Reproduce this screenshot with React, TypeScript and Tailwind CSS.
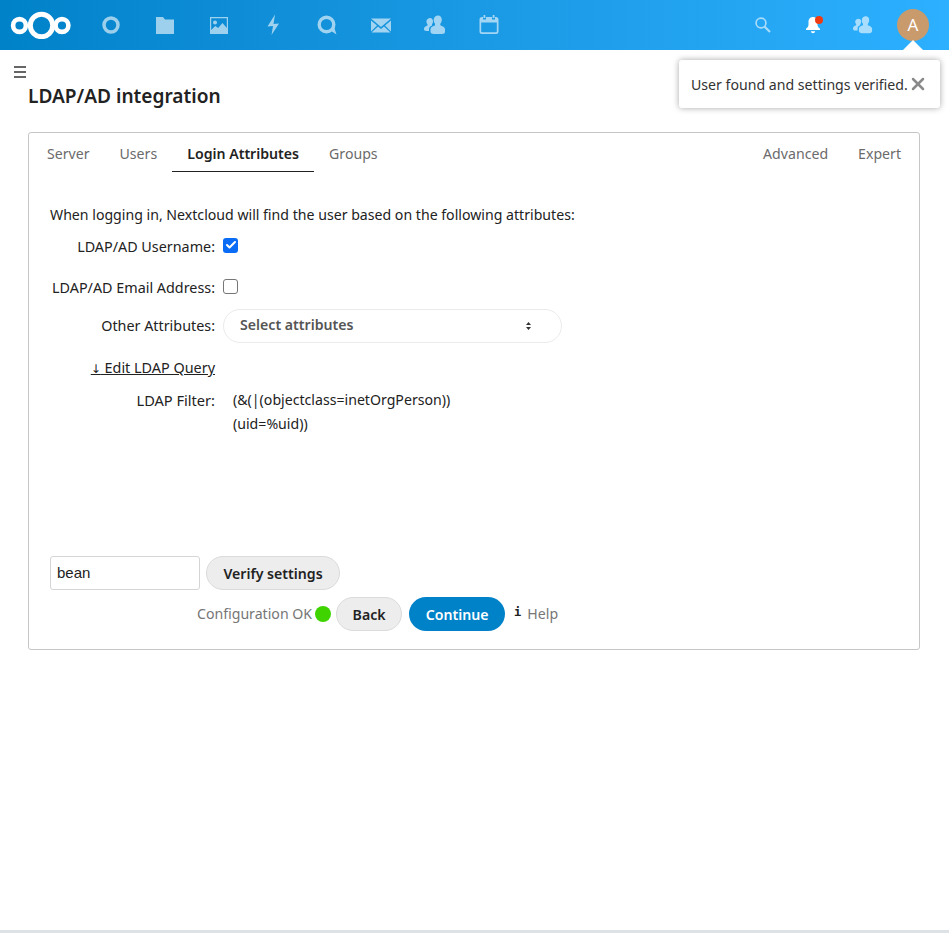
import { Check, X } from 'lucide-react';

const Logo = () => (
    <svg width="62" height="28" viewBox="0 0 62 28" fill="none" stroke="#fff">
        <circle cx="31.5" cy="14.5" r="11.2" strokeWidth="5" />
        <circle cx="9.5" cy="14.5" r="6.4" strokeWidth="4.6" />
        <circle cx="52" cy="14.5" r="6.4" strokeWidth="4.6" />
    </svg>
);

const NavIcon = ({ children }: { children: React.ReactNode }) => (
    <div className="w-[54px] h-[50px] flex items-center justify-center">
        <svg width="22" height="22" viewBox="0 0 22 22" fill="#fff" className="opacity-60">
            {children}
        </svg>
    </div>
);

const people = (
    <path d="M14 1.500c2.400 0 3.800 1.900 3.800 4.200 0 1.700-.7 3-1.500 4v1.500c2 .8 4.700 1.800 4.700 3.800v2.700c0 1.300-1.200 2.300-3 2.300h-8c-2 0-3.500-1-3.500-2.300V15c0-2 2.600-3 4.500-3.600V9.700c-.8-1-1.300-2.300-1.300-4 0-2.300 2-4.200 4.300-4.200zM6.200 4c1.700 0 2.800 1.400 2.800 3.200 0 1.300-.5 2.200-1 3v1.200c-2 .8-3 2-3 3.600v2H2c-1 0-2-.8-2-1.700v-.6c0-1.800 1.900-2.700 3.500-3.300v-1.200c-.6-.8-1.100-1.700-1.100-3 0-1.800 2-3.200 3.800-3.200z" />
);

const Field = ({ label, children }: { label: string; children: React.ReactNode }) => (
    <div className="flex items-center">
        <div className="w-[165px] text-right shrink-0 text-[#222] text-[14.35px]">{label}</div>
        <div className="ml-2 flex items-center">{children}</div>
    </div>
);

const Tab = ({ label, active }: { label: string; active?: boolean }) => (
    <div className={`px-[15px] h-10 pt-[5px] flex items-center border-b ${active ? 'border-[#222] text-[#222] font-semibold' : 'border-transparent text-[#6b6b6b]'}`}>
        {label}
    </div>
);

export default function App() {
    return (
        <div className="relative h-[933px] bg-white overflow-hidden flex flex-col text-[14.13px] text-[#222] font-['Noto_Sans',sans-serif]">
            <header className="h-[50px] shrink-0 flex items-center bg-gradient-to-r from-[#0082c9] to-[#2cb0ff]">
                <div className="ml-[10px] mr-[12px] flex"><Logo /></div>
                <NavIcon>
                    <circle cx="11" cy="11" r="7" fill="none" stroke="#fff" strokeWidth="3.5" />
                </NavIcon>
                <NavIcon>
                    <path d="M2 3h7l2 2.500h9V20H2z" />
                </NavIcon>
                <NavIcon>
                    <path fillRule="evenodd" d="M2 3h18v17H2zm1.200 1.200v14.600h15.600V4.200zM7 6.500a2 2 0 1 1 0 4 2 2 0 0 1 0-4zM3.200 16l4-4 3 2 4.300-5 4.300 5v4.800H3.200z" />
                </NavIcon>
                <NavIcon>
                    <path d="M13 0.500 L5.500 12.500 L11 12 L9.500 21 L17 9.500 L11.500 10z" />
                </NavIcon>
                <NavIcon>
                    <path d="M14.500 16.500 L20.500 20.500 L18 13z" />
                    <circle cx="10.500" cy="10.500" r="7.300" fill="none" stroke="#fff" strokeWidth="3.400" />
                </NavIcon>
                <NavIcon>
                    <path d="M1 4.500h20L11 13zM1 6.500v11l6-6zM21 6.500v11l-6-6zM8 12.500l3 2.500 3-2.500 6.500 6h-19z" />
                </NavIcon>
                <NavIcon>{people}</NavIcon>
                <NavIcon>
                    <path fillRule="evenodd" d="M5.500 1h1.800v3H5.500zM14.700 1h1.800v3h-1.800zM4 3h1v2.400h3V3h6v2.400h3V3h1a2.500 2.500 0 0 1 2.500 2.500v12A2.500 2.500 0 0 1 18 20H4a2.500 2.500 0 0 1-2.500-2.500v-12A2.500 2.500 0 0 1 4 3zM3.200 8.500v9c0 .5.3.8.8.8h14c.5 0 .8-.3.8-.8v-9z" />
                </NavIcon>
                <div className="ml-auto flex items-center">
                    <div className="w-[44px] h-[50px] flex items-center justify-center mr-[3px]">
                        <svg width="18" height="18" viewBox="0 0 18 18" fill="none" stroke="#fff" className="opacity-60">
                            <circle cx="7" cy="7" r="4.900" strokeWidth="1.700" />
                            <path d="M10.500 10.500 L16 16" strokeWidth="2.200" />
                        </svg>
                    </div>
                    <div className="relative w-[50px] h-[50px] flex items-center justify-center">
                        <svg width="16" height="18" viewBox="0 0 16 18" fill="#fff">
                            <path d="M8 1c3 0 4.500 2.300 4.500 5v3c0 1.500 1.500 3 2.500 3.800V14H1v-1.200C2 12 3.500 10.500 3.500 9V6C3.500 3.300 5 1 8 1zM5.800 15.200h4.400C10 16.500 9 17.200 8 17.200s-2-.7-2.200-2z" />
                        </svg>
                        <div className="absolute left-[27px] top-[16px] w-2 h-2 rounded-full bg-[#f03b12]" />
                    </div>
                    <div className="w-[50px] h-[50px] flex items-center justify-center">
                        <svg width="20" height="20" viewBox="0 0 22 22" fill="#fff" className="opacity-60">{people}</svg>
                    </div>
                    <div className="relative w-[50px] h-[50px] mr-[11px] flex items-center justify-center">
                        <div className="w-8 h-8 rounded-full bg-[#c99a6b] text-white text-[17px] flex items-center justify-center">A</div>
                        <div className="absolute left-[15px] bottom-0 w-0 h-0 border-x-[10px] border-x-transparent border-b-[10px] border-b-white" />
                    </div>
                </div>
            </header>

            <main className="flex-1 relative">
                <button className="absolute left-[14px] top-[16px] w-3 flex flex-col gap-[3px]">
                    <span className="h-[2px] bg-[#666]" />
                    <span className="h-[2px] bg-[#666]" />
                    <span className="h-[2px] bg-[#666]" />
                </button>

                <div className="absolute right-[9px] top-[10px] h-[48px] pl-[12px] pr-[12px] w-[261px] flex items-center justify-between rounded-[3px] bg-white shadow-[0_0_6px_rgba(0,0,0,0.35)]">
                    <span className="whitespace-nowrap text-[#333] mt-[2px]">User found and settings verified.</span>
                    <X size={20} strokeWidth={3} className="text-[#8a8a8a] shrink-0" />
                </div>

                <div className="pl-7 pr-[29px]">
                    <h2 className="pt-[32px] h-[82px] text-[19.1px] leading-[28px] font-semibold text-[#222]">LDAP/AD integration</h2>

                    <section className="h-[518px] border border-[#c6c6c6] rounded-[3px] flex flex-col">
                        <nav className="flex justify-between pl-[3px] pr-[3px] mt-[-1px]">
                            <div className="flex">
                                <Tab label="Server" />
                                <Tab label="Users" />
                                <Tab label="Login Attributes" active />
                                <Tab label="Groups" />
                            </div>
                            <div className="flex">
                                <Tab label="Advanced" />
                                <Tab label="Expert" />
                            </div>
                        </nav>

                        <div className="pl-[21px] flex-1 flex flex-col">
                            <p className="mt-[33px] leading-[20px]">When logging in, Nextcloud will find the user based on the following attributes:</p>

                            <div className="mt-[11px] flex flex-col">
                                <Field label="LDAP/AD Username:">
                                    <div className="w-[15px] h-[15px] mt-[-3px] rounded-[3px] bg-[#0a6cf5] flex items-center justify-center">
                                        <Check size={12} strokeWidth={4} className="text-white" />
                                    </div>
                                </Field>
                                <div className="h-[19px]" />
                                <Field label="LDAP/AD Email Address:">
                                    <div className="w-[15px] h-[15px] mt-[-1px] rounded-[3px] bg-white border border-[#767676]" />
                                </Field>
                                <div className="h-[11px]" />
                                <Field label="Other Attributes:">
                                    <div className="w-[339px] h-[34px] rounded-full border border-[#ebebeb] pl-4 pr-[30px] flex items-center justify-between font-semibold text-[#555]">
                                        <span className="mt-[-2px]">Select attributes</span>
                                        <svg width="5" height="8" viewBox="0 0 5 8" fill="#333">
                                            <path d="M2.500 0 L5 3 H0z M2.500 8 L5 5 H0z" />
                                        </svg>
                                    </div>
                                </Field>
                            </div>

                            <div className="mt-[14px] w-[165px] text-right underline whitespace-nowrap text-[#222] text-[14.4px]">
                                <span className="font-['DejaVu_Sans',sans-serif] text-[12px]">↓</span> Edit LDAP Query
                            </div>

                            <div className="mt-[9px] flex leading-[24px]">
                                <div className="w-[165px] text-right shrink-0 text-[14.6px]">LDAP Filter:</div>
                                <div className="ml-[18px]">
                                    <div>(&amp;(|(objectclass=inetOrgPerson))</div>
                                    <div>(uid=%uid))</div>
                                </div>
                            </div>

                            <div className="mt-[120px] flex items-center gap-[6px]">
                                <input
                                    readOnly
                                    value="bean"
                                    className="w-[150px] h-[34px] px-[6px] rounded-[3px] border border-[#d5d5d5] text-[15px] text-[#222] font-['Liberation_Sans',sans-serif]"
                                />
                                <button className="w-[134px] h-[34px] pt-[1px] rounded-full border border-[#dbdbdb] bg-[#ededed] font-semibold text-[#222]">Verify settings</button>
                            </div>

                            <div className="mt-[7px] ml-[147px] flex items-center">
                                <span className="text-[#767676] whitespace-nowrap">Configuration OK</span>
                                <span className="ml-[3px] w-4 h-4 rounded-full bg-[#3fd400]" />
                                <button className="ml-[5px] w-[66px] h-[34px] pt-[2px] rounded-full border border-[#dbdbdb] bg-[#ededed] font-semibold text-[#222]">Back</button>
                                <button className="ml-[7px] w-[96px] h-[34px] pt-[2px] rounded-full bg-[#0082c9] font-semibold text-white">Continue</button>
                                <span className="ml-[9px] font-['DejaVu_Sans_Mono',monospace] font-bold text-[12px] mt-[-4px] text-[#222]">i</span>
                                <span className="ml-[6px] text-[#767676]">Help</span>
                            </div>
                        </div>
                    </section>
                </div>
            </main>

            <div className="h-[3px] shrink-0 bg-[#dde2e7]" />
        </div>
    );
}
